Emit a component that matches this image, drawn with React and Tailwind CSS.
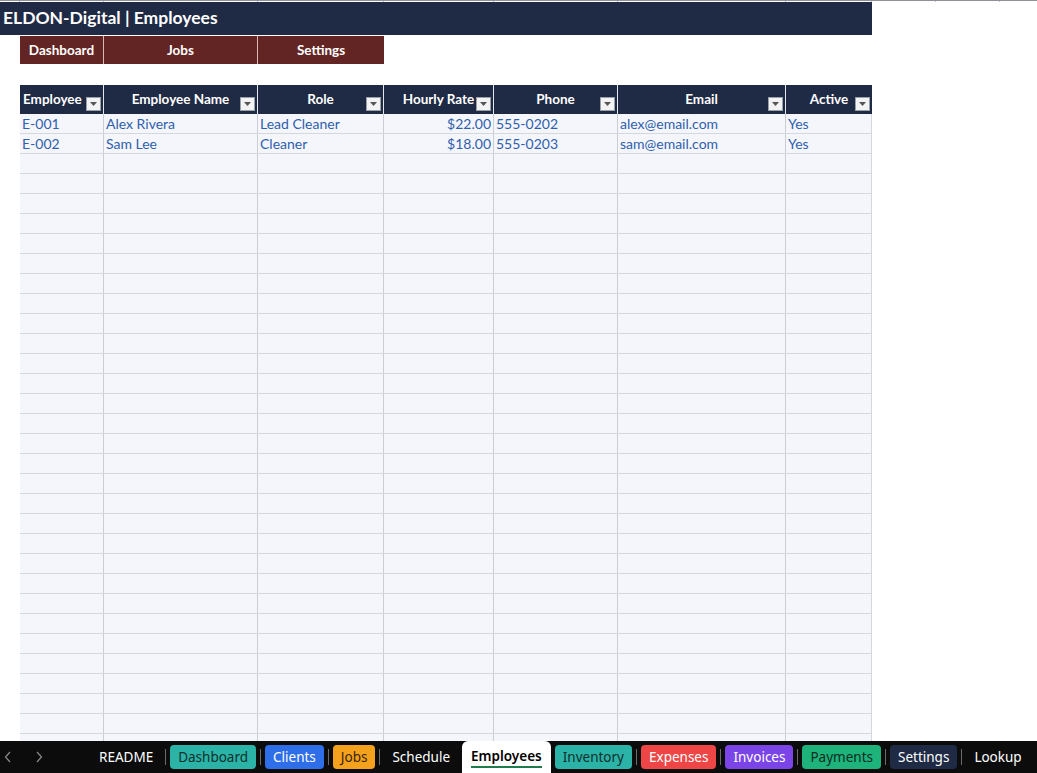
import React from 'react'

const cols = [
  { key: 'id', label: 'Employee', w: 'w-[84px]', left: true },
  { key: 'name', label: 'Employee Name', w: 'w-[154px]' },
  { key: 'role', label: 'Role', w: 'w-[126px]' },
  { key: 'rate', label: 'Hourly Rate', w: 'w-[110px]' },
  { key: 'phone', label: 'Phone', w: 'w-[124px]' },
  { key: 'email', label: 'Email', w: 'w-[168px]' },
  { key: 'active', label: 'Active', w: 'w-[86px]' },
]

const rows = [
  { id: 'E-001', name: 'Alex Rivera', role: 'Lead Cleaner', rate: '$22.00', phone: '555-0202', email: 'alex@email.com', active: 'Yes' },
  { id: 'E-002', name: 'Sam Lee', role: 'Cleaner', rate: '$18.00', phone: '555-0203', email: 'sam@email.com', active: 'Yes' },
]

const EMPTY_ROWS = 30

const tabs = [
  { label: 'README' },
  { label: 'Dashboard', cls: 'bg-[#2bb3a7] text-[#10302c]' },
  { label: 'Clients', cls: 'bg-[#2f6ee9] text-white' },
  { label: 'Jobs', cls: 'bg-[#f4a11d] text-[#3a2506]' },
  { label: 'Schedule' },
  { label: 'Employees', active: true },
  { label: 'Inventory', cls: 'bg-[#2bb3a7] text-[#10302c]' },
  { label: 'Expenses', cls: 'bg-[#ee4646] text-white' },
  { label: 'Invoices', cls: 'bg-[#7b44e6] text-white' },
  { label: 'Payments', cls: 'bg-[#1eb37a] text-[#0b2d1f]' },
  { label: 'Settings', cls: 'bg-[#1f2a45] text-white' },
  { label: 'Lookup' },
]

function FilterButton() {
  return (
    <span className="absolute bottom-[3px] right-[2px] flex h-[14px] w-[15px] items-center justify-center border border-[#9aa0a8] bg-[#f3f3f3]">
      <svg width="7" height="4" viewBox="0 0 7 4">
        <path d="M0 0h7L3.5 4z" fill="#555" />
      </svg>
    </span>
  )
}

export default function App() {
  return (
    <div className="flex h-[773px] w-[1037px] flex-col overflow-hidden bg-white font-['Lato','Open_Sans',sans-serif]">
      {/* sheet gridline remnant */}
      <div className="flex h-[2px] shrink-0 border-t border-[#8f9399]">
        <div className="w-[20px] border-r border-[#b8bcc2]" />
        <div className="w-[84px] border-r border-[#b8bcc2]" />
        <div className="w-[154px] border-r border-[#b8bcc2]" />
        <div className="w-[126px] border-r border-[#b8bcc2]" />
        <div className="w-[110px] border-r border-[#b8bcc2]" />
        <div className="w-[124px] border-r border-[#b8bcc2]" />
        <div className="w-[168px] border-r border-[#b8bcc2]" />
        <div className="w-[86px] border-r border-[#b8bcc2]" />
        <div className="w-[64px] border-r border-[#b8bcc2]" />
        <div className="w-[64px] border-r border-[#b8bcc2]" />
      </div>

      <div className="flex h-[33px] w-[872px] shrink-0 items-center bg-[#1f2a45] pl-[3px] text-[17.5px] font-bold text-white">
        ELDON-Digital | Employees
      </div>

      <div className="ml-[20px] mt-[1px] flex h-[28px] shrink-0 text-[13.5px] font-bold text-white">
        <div className="flex w-[84px] items-center justify-center border-r border-[#d9b8b6] bg-[#632523]">Dashboard</div>
        <div className="flex w-[154px] items-center justify-center border-r border-[#d9b8b6] bg-[#632523]">Jobs</div>
        <div className="flex w-[126px] items-center justify-center bg-[#632523]">Settings</div>
      </div>

      <div className="ml-[20px] mt-[21px] flex min-h-0 w-[852px] flex-1 flex-col overflow-hidden">
        <div className="flex h-[29px] shrink-0 bg-[#1f2a45] text-[13.5px] font-bold text-white">
          {cols.map((c, i) => (
            <div
              key={c.key}
              className={`${c.w} relative flex items-center ${c.left ? 'justify-start pl-[3px]' : 'justify-center'} ${i < cols.length - 1 ? 'border-r border-[#e3e6ec]' : ''}`}
            >
              <span>{c.label}</span>
              <FilterButton />
            </div>
          ))}
        </div>

        <div className="flex shrink-0 flex-col bg-[#f4f6fb] text-[14px] text-[#2f5fae]">
          {[...rows, ...Array(EMPTY_ROWS).fill(null)].map((r, ri) => (
            <div key={ri} className="flex h-[20px] shrink-0 border-b border-[#d3d7de]">
              {cols.map((c, i) => (
                <div
                  key={c.key}
                  className={`${c.w} flex items-center px-[2px] ${i < cols.length - 1 ? 'border-r border-[#c9cdd4]' : 'border-r border-[#d3d7de]'} ${c.key === 'rate' ? 'justify-end' : ''}`}
                >
                  {r ? r[c.key] : ''}
                </div>
              ))}
            </div>
          ))}
        </div>
      </div>

      <div className="flex h-[32px] shrink-0 items-center bg-[#0c0c0c] font-['Noto_Sans','Open_Sans',sans-serif] text-[13.5px] text-white">
        <span className="ml-[4px] flex w-[31px] items-center">
          <svg width="8" height="12" viewBox="0 0 8 12">
            <path d="M6 1L1.5 6L6 11" fill="none" stroke="#8a8a8a" strokeWidth="1.2" />
          </svg>
        </span>
        <span className="flex w-[30px] items-center">
          <svg width="8" height="12" viewBox="0 0 8 12">
            <path d="M2 1L6.5 6L2 11" fill="none" stroke="#8a8a8a" strokeWidth="1.2" />
          </svg>
        </span>
        <div className="ml-[26px] flex h-full items-center">
          {tabs.map((t, i) => (
            <React.Fragment key={t.label}>
              {i > 0 && !t.active && !tabs[i - 1].active && <span className="mx-[4px] h-[16px] w-px bg-[#6b6b6b]" />}
              {t.active ? (
                <div className="mx-[4px] flex h-full flex-col items-center justify-center rounded-t-[6px] bg-white px-[9px] text-black">
                  <span className="font-semibold leading-[18px]">{t.label}</span>
                  <span className="mt-[1px] h-[2px] w-full bg-[#1f7a4c]" />
                </div>
              ) : (
                <div className={`flex h-[24px] items-center rounded-[4px] px-[8px] ${t.cls ?? ''}`}>{t.label}</div>
              )}
            </React.Fragment>
          ))}
        </div>
      </div>
    </div>
  )
}
